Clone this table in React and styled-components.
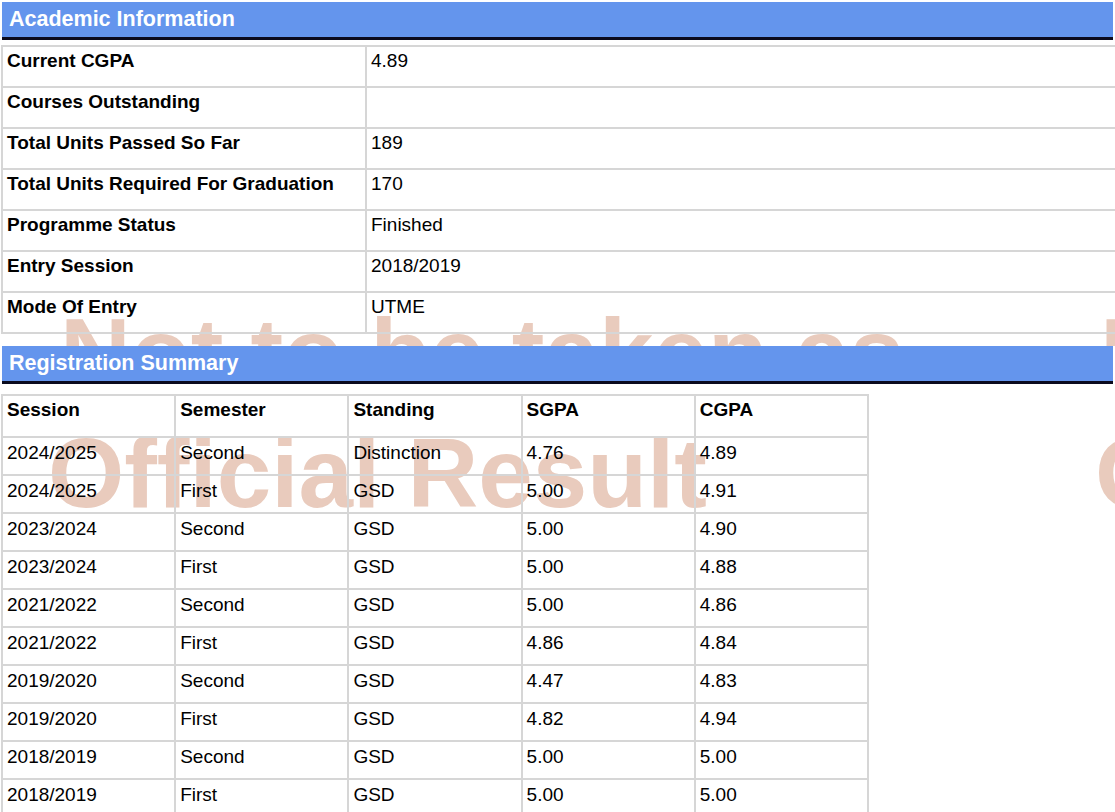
import React from "react";
import styled, { createGlobalStyle } from "styled-components";

const Global = createGlobalStyle`
  html, body { margin: 0; padding: 0; background: #ffffff; }
  body { font-family: "Liberation Sans", Arial, sans-serif; color: #000; }
`;

const Page = styled.div`
  position: relative;
  isolation: isolate;
  z-index: 0;
  width: 1115px;
  height: 812px;
  overflow: hidden;
  padding: 2px 2px 0 1px;
  box-sizing: border-box;
  background: #ffffff;
`;

/* A clipped window of the watermark, so it never shows over the section headers */
const WatermarkWindow = styled.div`
  position: absolute;
  left: 0;
  top: ${(p) => p.$top}px;
  width: 1115px;
  height: ${(p) => p.$height}px;
  overflow: hidden;
  z-index: -1;
  pointer-events: none;
  font-family: "Liberation Sans", Arial, sans-serif;
  font-weight: 700;
  font-size: 98px;
  line-height: 120px;
  color: #e9cbbd;
  white-space: nowrap;
`;

const WatermarkLine = styled.div`
  display: flex;
  margin-top: ${(p) => p.$offset}px;
  padding-left: ${(p) => p.$indent}px;
  gap: ${(p) => p.$gap}px;
`;

const Section = styled.section`
  margin-bottom: ${(p) => p.$after}px;
`;

const Header = styled.h2`
  margin: 0 0 0 1px;
  height: 35px;
  width: 1104px;
  background: #6495ed;
  border-bottom: 3px solid #0b0b1e;
  color: #ffffff;
  font-size: 21.5px;
  font-weight: 700;
  line-height: 35px;
  padding-left: 7px;
  box-sizing: content-box;
`;

const Table = styled.table`
  border-collapse: collapse;
  margin-top: ${(p) => p.$top}px;
  width: ${(p) => p.$width}px;
  table-layout: fixed;
  font-size: 19px;
`;

const Cell = styled.td`
  border: 2px solid #d6d6d6;
  padding: ${(p) => p.$pad};
  line-height: 22px;
  vertical-align: top;
  text-align: left;
  font-weight: ${(p) => (p.$bold ? 700 : 400)};
  white-space: nowrap;
`;

const HeadCell = styled.th`
  border: 2px solid #d6d6d6;
  padding: 3px 4px 15px 4px;
  line-height: 22px;
  vertical-align: top;
  text-align: left;
  font-weight: 700;
  white-space: nowrap;
`;

const academic = [
  ["Current CGPA", "4.89"],
  ["Courses Outstanding", ""],
  ["Total Units Passed So Far", "189"],
  ["Total Units Required For Graduation", "170"],
  ["Programme Status", "Finished"],
  ["Entry Session", "2018/2019"],
  ["Mode Of Entry", "UTME"],
];

const summary = [
  ["2024/2025", "Second", "Distinction", "4.76", "4.89"],
  ["2024/2025", "First", "GSD", "5.00", "4.91"],
  ["2023/2024", "Second", "GSD", "5.00", "4.90"],
  ["2023/2024", "First", "GSD", "5.00", "4.88"],
  ["2021/2022", "Second", "GSD", "5.00", "4.86"],
  ["2021/2022", "First", "GSD", "4.86", "4.84"],
  ["2019/2020", "Second", "GSD", "4.47", "4.83"],
  ["2019/2020", "First", "GSD", "4.82", "4.94"],
  ["2018/2019", "Second", "GSD", "5.00", "5.00"],
  ["2018/2019", "First", "GSD", "5.00", "5.00"],
];

export default function App() {
  return (
    <>
      <Global />
      <Page>
        <WatermarkWindow $top={293} $height={53} aria-hidden="true">
          <WatermarkLine $offset={0} $indent={60} $gap={196}>
            <span>Not to be taken as</span>
            <span>Not</span>
          </WatermarkLine>
        </WatermarkWindow>
        <WatermarkWindow $top={385} $height={427} aria-hidden="true">
          <WatermarkLine $offset={28} $indent={48} $gap={388}>
            <span>Official Result</span>
            <span>Official</span>
          </WatermarkLine>
        </WatermarkWindow>
        <Section $after={12}>
          <Header>Academic Information</Header>
          <Table $top={5} $width={1140}>
            <colgroup>
              <col style={{ width: "364px" }} />
              <col />
            </colgroup>
            <tbody>
              {academic.map(([k, v]) => (
                <tr key={k}>
                  <Cell $bold $pad="3px 4px 14px 4px">{k}</Cell>
                  <Cell $pad="3px 4px 14px 4px">{v}</Cell>
                </tr>
              ))}
            </tbody>
          </Table>
        </Section>
        <Section $after={0}>
          <Header>Registration Summary</Header>
          <Table $top={10} $width={868}>
            <thead>
              <tr>
                <HeadCell>Session</HeadCell>
                <HeadCell>Semester</HeadCell>
                <HeadCell>Standing</HeadCell>
                <HeadCell>SGPA</HeadCell>
                <HeadCell>CGPA</HeadCell>
              </tr>
            </thead>
            <tbody>
              {summary.map((r, i) => (
                <tr key={i}>
                  {r.map((c, j) => (
                    <Cell key={j} $pad="4px 4px 10px 4px">{c}</Cell>
                  ))}
                </tr>
              ))}
            </tbody>
          </Table>
        </Section>
      </Page>
    </>
  );
}
